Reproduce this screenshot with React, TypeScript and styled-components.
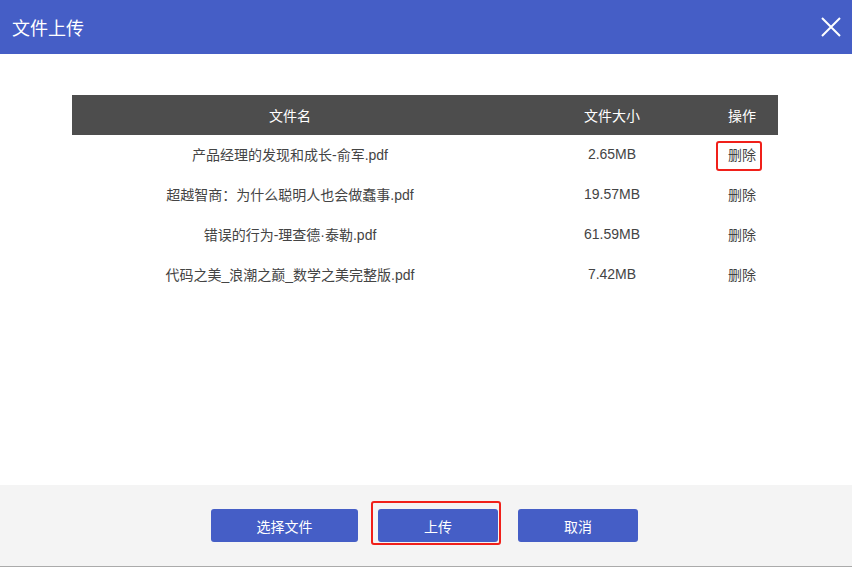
import React from 'react'
import styled, { createGlobalStyle } from 'styled-components'

interface FileItem {
    id: number
    name: string
    size: string
}

const files: FileItem[] = [
    { id: 1, name: '产品经理的发现和成长-俞军.pdf', size: '2.65MB' },
    { id: 2, name: '超越智商：为什么聪明人也会做蠢事.pdf', size: '19.57MB' },
    { id: 3, name: '错误的行为-理查德·泰勒.pdf', size: '61.59MB' },
    { id: 4, name: '代码之美_浪潮之巅_数学之美完整版.pdf', size: '7.42MB' },
]

const GlobalStyle = createGlobalStyle`
    html, body {
        margin: 0;
        padding: 0;
        background: #ffffff;
        font-family: "Liberation Sans", "Noto Sans CJK SC", sans-serif;
    }
    * { box-sizing: border-box; }
`

const App: React.FC = () => {
    return (
        <>
            <GlobalStyle />
            <Dialog>
                <Header>
                    <Title>文件上传</Title>
                    <CloseButton aria-label='关闭'>
                        <svg width='20' height='20' viewBox='0 0 20 20'>
                            <path d='M1 1 L19 19 M19 1 L1 19' stroke='#ffffff' strokeWidth='2' fill='none' />
                        </svg>
                    </CloseButton>
                </Header>

                <Body>
                    <Table>
                        <HeadRow>
                            <Cell>文件名</Cell>
                            <Cell>文件大小</Cell>
                            <Cell $pad>操作</Cell>
                        </HeadRow>
                        {files.map((item, i) => (
                            <Row key={item.id}>
                                <Cell>{item.name}</Cell>
                                <Cell>{item.size}</Cell>
                                <Cell $pad>
                                    <DeleteLink $marked={i === 0}>删除</DeleteLink>
                                </Cell>
                            </Row>
                        ))}
                    </Table>
                </Body>

                <Footer>
                    <Button $width={147}>选择文件</Button>
                    <Button $width={120} $marked>上传</Button>
                    <Button $width={120}>取消</Button>
                </Footer>
            </Dialog>
        </>
    )
}

const Dialog = styled.div`
    width: 852px;
    height: 567px;
    display: flex;
    flex-direction: column;
    background: #ffffff;
`

const Header = styled.header`
    height: 54px;
    flex: none;
    background: #455ec6;
    display: flex;
    align-items: center;
    justify-content: space-between;
    padding: 0 11px 0 12px;
`

const Title = styled.h1`
    margin: 0;
    font-family: "Noto Sans CJK SC", sans-serif;
    font-size: 18px;
    font-weight: 400;
    color: #ffffff;
`

const CloseButton = styled.button`
    border: none;
    background: none;
    padding: 0;
    width: 20px;
    height: 20px;
    display: flex;
    cursor: pointer;
`

const Body = styled.section`
    flex: 1;
    padding: 41px 74px 0 72px;
`

const Table = styled.div`
    width: 706px;
`

const HeadRow = styled.div`
    display: grid;
    grid-template-columns: 436px 208px 62px;
    height: 40px;
    align-items: center;
    background: #4d4d4d;
    color: #ffffff;
    font-family: "Noto Sans CJK SC", sans-serif;
    font-size: 14px;
`

const Row = styled.div`
    display: grid;
    grid-template-columns: 436px 208px 62px;
    height: 40px;
    padding-bottom: 2px;
    align-items: center;
    color: #444444;
    font-family: "Liberation Sans", "Noto Sans CJK SC", sans-serif;
    font-size: 14px;
`

const Cell = styled.div<{ $pad?: boolean }>`
    text-align: center;
    padding-right: ${p => (p.$pad ? '10px' : '0')};
    white-space: nowrap;
`

const DeleteLink = styled.span<{ $marked?: boolean }>`
    position: relative;
    cursor: pointer;
    color: #444444;
    font-family: "Noto Sans CJK SC", sans-serif;

    ${p => p.$marked && `
        &::after {
            content: '';
            position: absolute;
            left: -12px;
            right: -6px;
            top: -3px;
            bottom: -7px;
            border: 2px solid #f0201a;
            border-radius: 3px;
        }
    `}
`

const Footer = styled.footer`
    height: 82px;
    flex: none;
    background: #f4f4f4;
    border-bottom: 1px solid #aaaaaa;
    display: flex;
    justify-content: center;
    align-items: center;
    gap: 20px;
    padding-right: 3px;
`

const Button = styled.button<{ $width: number; $marked?: boolean }>`
    position: relative;
    width: ${p => p.$width}px;
    height: 33px;
    border: none;
    border-radius: 3px;
    background: #455ec6;
    color: #ffffff;
    font-family: "Noto Sans CJK SC", sans-serif;
    font-size: 14px;
    cursor: pointer;

    ${p => p.$marked && `
        &::after {
            content: '';
            position: absolute;
            left: -7px;
            right: -3px;
            top: -8px;
            bottom: -3px;
            border: 2px solid #f0201a;
            border-radius: 3px;
        }
    `}
`

export default App
